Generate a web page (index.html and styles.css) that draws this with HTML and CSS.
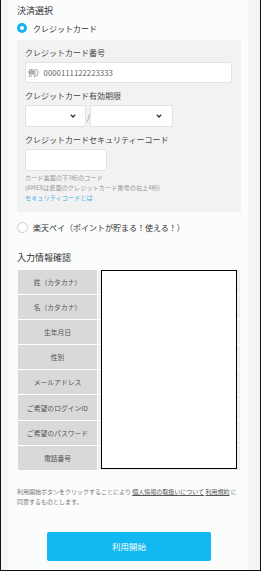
FILE: index.html
```html
<!DOCTYPE html>
<html lang="ja">
<head>
    <meta charset="UTF-8">
    <meta name="viewport" content="width=device-width, initial-scale=1.0">
    <title>決済選択</title>
    <link rel="stylesheet" href="styles.css">
</head>
<body>
    <div class="frame">
        <div class="side side-left"></div>

        <div class="main">
            <h2 class="section-title">決済選択</h2>

            <label class="radio-row">
                <span class="radio checked"></span>
                <span>クレジットカード</span>
            </label>

            <div class="card-box">
                <div class="field-label">クレジットカード番号</div>
                <div class="input input-wide">例）0000111122223333</div>

                <div class="field-label">クレジットカード有効期限</div>
                <div class="expiry">
                    <div class="select select-month">
                        <svg class="chevron" width="6" height="4" viewBox="0 0 6 4"><path d="M0.8 0.8 L3 3 L5.2 0.8" fill="none" stroke="#333" stroke-width="1.3"/></svg>
                    </div>
                    <span class="slash">/</span>
                    <div class="select select-year">
                        <svg class="chevron" width="6" height="4" viewBox="0 0 6 4"><path d="M0.8 0.8 L3 3 L5.2 0.8" fill="none" stroke="#333" stroke-width="1.3"/></svg>
                    </div>
                </div>

                <div class="field-label">クレジットカードセキュリティーコード</div>
                <div class="input input-short"></div>

                <div class="note">
                    <p>カード裏面の下3桁のコード</p>
                    <p>(AMEXは表面のクレジットカード番号の右上4桁)</p>
                    <p class="note-link">セキュリティコードとは</p>
                </div>
            </div>

            <label class="radio-row radio-row-second">
                <span class="radio"></span>
                <span>楽天ペイ（ポイントが貯まる！使える！）</span>
            </label>

            <h2 class="section-title confirm-title">入力情報確認</h2>

            <div class="confirm-table">
                <div class="cell-label">姓（カタカナ）</div><div class="cell-value"></div>
                <div class="cell-label">名（カタカナ）</div><div class="cell-value"></div>
                <div class="cell-label">生年月日</div><div class="cell-value"></div>
                <div class="cell-label">性別</div><div class="cell-value"></div>
                <div class="cell-label">メールアドレス</div><div class="cell-value"></div>
                <div class="cell-label">ご希望のログインID</div><div class="cell-value"></div>
                <div class="cell-label">ご希望のパスワード</div><div class="cell-value"></div>
                <div class="cell-label">電話番号</div><div class="cell-value"></div>
                <div class="masked"></div>
            </div>

            <p class="consent">利用開始ボタンをクリックすることにより <a href="#">個人情報の取扱いについて</a> <a href="#">利用規約</a> に<br>同意するものとします。</p>

            <button class="start-button">利用開始</button>
        </div>

        <div class="side side-right"></div>
    </div>
</body>
</html>
```

FILE: styles.css
```css
body {
    margin: 0;
    font-family: "Noto Sans CJK JP", "Noto Sans", sans-serif;
    color: #444;
}
.frame {
    display: flex;
    width: 261px;
    height: 571px;
    box-sizing: border-box;
    border-left: 1px solid #111;
    border-right: 1px solid #111;
    border-bottom: 1px solid #111;
    overflow: hidden;
}
.side {
    background: #f4f5f9;
}
.side-left {
    width: 7px;
}
.side-right {
    width: 12px;
}
.main {
    width: 240px;
    padding-left: 9px;
    box-sizing: border-box;
    background: #fbfcfc;
}
.section-title {
    margin: 5px 0 0;
    font-size: 9px;
    line-height: 12px;
    font-weight: normal;
    color: #333;
}
.radio-row {
    display: flex;
    align-items: center;
    gap: 5px;
    margin-top: 5px;
    height: 12px;
    font-size: 8px;
    color: #333;
}
.radio {
    width: 11px;
    height: 11px;
    box-sizing: border-box;
    border-radius: 50%;
    border: 1px solid #ccc;
    background: #fff;
    flex-shrink: 0;
}
.radio.checked {
    width: 10px;
    height: 10px;
    border: 3px solid #17b3ee;
    margin-right: 1px;
}
.card-box {
    margin-top: 6px;
    width: 224px;
    box-sizing: border-box;
    padding: 8px 8px 9px;
    background: #f2f2f2;
}
.field-label {
    font-size: 8px;
    line-height: 10px;
    color: #444;
    margin-top: 8px;
}
.field-label:first-child {
    margin-top: 0;
}
.input, .select {
    background: #fff;
    border: 1px solid #e2e2e2;
    border-radius: 2px;
    box-sizing: border-box;
    margin-top: 4px;
}
.input-wide {
    width: 207px;
    height: 21px;
    padding-left: 2px;
    font-size: 7.8px;
    line-height: 19px;
    color: #666;
}
.input-short {
    width: 82px;
    height: 22px;
}
.expiry {
    display: flex;
    align-items: center;
}
.select {
    height: 22px;
    display: flex;
    align-items: center;
    justify-content: flex-end;
    padding-right: 9px;
}
.select-month {
    width: 61px;
}
.select-year {
    width: 83px;
    padding-right: 10px;
}
.slash {
    font-size: 8px;
    color: #777;
    margin: 4px 1px 0;
    width: 2px;
}
.note {
    margin-top: 2px;
    font-size: 6.2px;
    line-height: 10px;
    color: #999;
}
.note p {
    margin: 0;
}
.note-link {
    color: #3ab0e8;
}
.radio-row-second {
    margin-top: 9px;
}
.confirm-title {
    margin-top: 19px;
}
.confirm-table {
    position: relative;
    margin: 6px 0 0 1px;
    width: 222px;
    display: grid;
    grid-template-columns: 79px 142px;
    grid-auto-rows: 24.1px;
    gap: 1px;
    background: #fff;
}
.cell-label {
    background: #d9d9d9;
    font-size: 6.8px;
    color: #555;
    display: flex;
    align-items: center;
    justify-content: center;
}
.cell-value {
    background: #efefef;
}
.masked {
    position: absolute;
    left: 83px;
    top: 0;
    width: 136px;
    height: 199px;
    box-sizing: border-box;
    border: 1.5px solid #000;
    background: #fff;
}
.consent {
    margin: 17px 0 0;
    font-size: 6px;
    line-height: 10px;
    color: #777;
}
.consent a {
    color: #555;
    text-decoration: underline;
}
.start-button {
    display: block;
    margin: 25px 0 0 30px;
    width: 164px;
    height: 29px;
    border: none;
    border-radius: 2px;
    background: #12b8f1;
    color: #fff;
    font-family: inherit;
    font-size: 8.5px;
}
```
